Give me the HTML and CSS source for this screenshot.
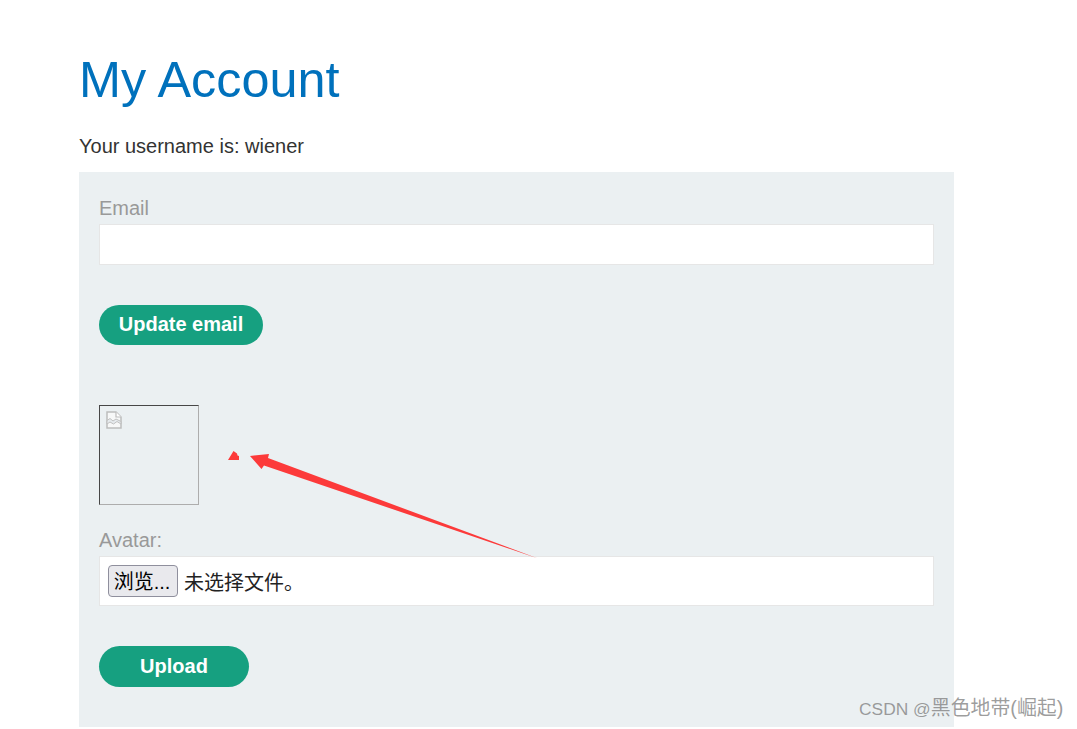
FILE: index.html
```html
<!DOCTYPE html>
<html lang="zh">
<head>
<meta charset="utf-8">
<title>My Account</title>
<link rel="stylesheet" href="styles.css">
</head>
<body>
<main class="page">
  <h1 class="title">My Account</h1>
  <p class="username">Your username is: wiener</p>
  <section class="panel">
    <form class="email-form">
      <label class="label">Email</label>
      <div class="field field-email"></div>
      <button type="button" class="pill pill-email">Update email</button>
    </form>
    <div class="avatar">
      <svg class="broken" width="16" height="18" viewBox="0 0 16 18">
        <path d="M1 1H10L15 6V17H1Z" fill="#f7f8f8" stroke="#bdbdbd" stroke-width="1.5"/>
        <path d="M10 1V6H15" fill="#fff" stroke="#bdbdbd" stroke-width="1.2"/>
        <path d="M1 9.500L4 7.500L7 10L10 8L15 10.500V13L11 10.500L7.500 13L4 11L1 13Z" fill="#e6ebee" stroke="#c0c0c0" stroke-width="1"/>
      </svg>
    </div>
    <form class="avatar-form">
      <label class="label">Avatar:</label>
      <div class="field field-file">
        <button type="button" class="browse">浏览...</button>
        <span class="file-name">未选择文件。</span>
      </div>
      <button type="button" class="pill pill-upload">Upload</button>
    </form>
  </section>
</main>
<svg class="arrow" width="320" height="116" viewBox="0 0 320 116">
  <path d="M8 18L13.500 9L17 11.500L17.500 13.500L19 14V18Z" fill="#fc3a3a"/>
  <path d="M30 14L49 12L48 16L318 116.500L44 23.500L41.500 27Z" fill="#fc3a3a"/>
</svg>
<div class="watermark"><span class="wm-latin">CSDN @</span><span class="wm-cjk">黑色地带(崛起)</span></div>
</body>
</html>
```

FILE: styles.css
```css
* {
  box-sizing: border-box;
}
html, body {
  margin: 0;
  height: 729px;
  overflow: hidden;
  background: #fff;
}
body {
  font-family: "Liberation Sans", "Noto Sans CJK SC", sans-serif;
  color: #333332;
  position: relative;
}
.page {
  padding: 50px 0 0 79px;
  width: 954px;
}
.title {
  margin: 0;
  font-size: 50.4px;
  line-height: 60px;
  font-weight: 400;
  color: #0071bc;
}
.username {
  margin: 25px 0 0;
  font-size: 20px;
  line-height: 23px;
}
.panel {
  margin-top: 14px;
  height: 555px;
  background: #ebf0f2;
  padding: 24px 20px 0;
}
.label {
  display: block;
  font-size: 20px;
  line-height: 24px;
  color: #999;
}
.field {
  background: #fff;
  border: 1px solid #e6e6e6;
}
.field-email {
  margin-top: 4px;
  height: 41px;
}
.pill {
  display: block;
  border: 0;
  border-radius: 25px;
  background: #16a080;
  color: #fff;
  font: 700 20px/22px "Liberation Sans", sans-serif;
  padding: 0 0 2px;
}
.pill-email {
  margin-top: 40px;
  width: 164px;
  height: 40px;
}
.avatar {
  margin-top: 60px;
  width: 100px;
  height: 100px;
  border: 1px solid;
  border-color: #474747 #adadad #adadad #474747;
  padding: 5px 0 0 6px;
}
.broken {
  display: block;
}
.avatar-form {
  margin-top: 23px;
}
.field-file {
  margin-top: 4px;
  height: 50px;
  display: flex;
  align-items: center;
  padding: 0 8px;
  gap: 6px;
  font-size: 20px;
}
.browse {
  width: 70px;
  height: 32px;
  padding: 2px 2px 0 0;
  border: 1px solid #8f8f9d;
  border-radius: 4px;
  background: #e9e9ed;
  color: #000;
  font: 400 20px/24px "Liberation Sans", "Noto Sans CJK SC", sans-serif;
}
.file-name {
  color: #222;
}
.pill-upload {
  margin-top: 40px;
  width: 150px;
  height: 41px;
}
.arrow {
  position: absolute;
  left: 220px;
  top: 442px;
}
.watermark {
  position: absolute;
  left: 859px;
  top: 696px;
  line-height: 24px;
  color: rgba(125, 125, 125, 0.75);
  white-space: nowrap;
}
.wm-latin {
  font-size: 17.400px;
}
.wm-cjk {
  font-size: 19.900px;
}
```
